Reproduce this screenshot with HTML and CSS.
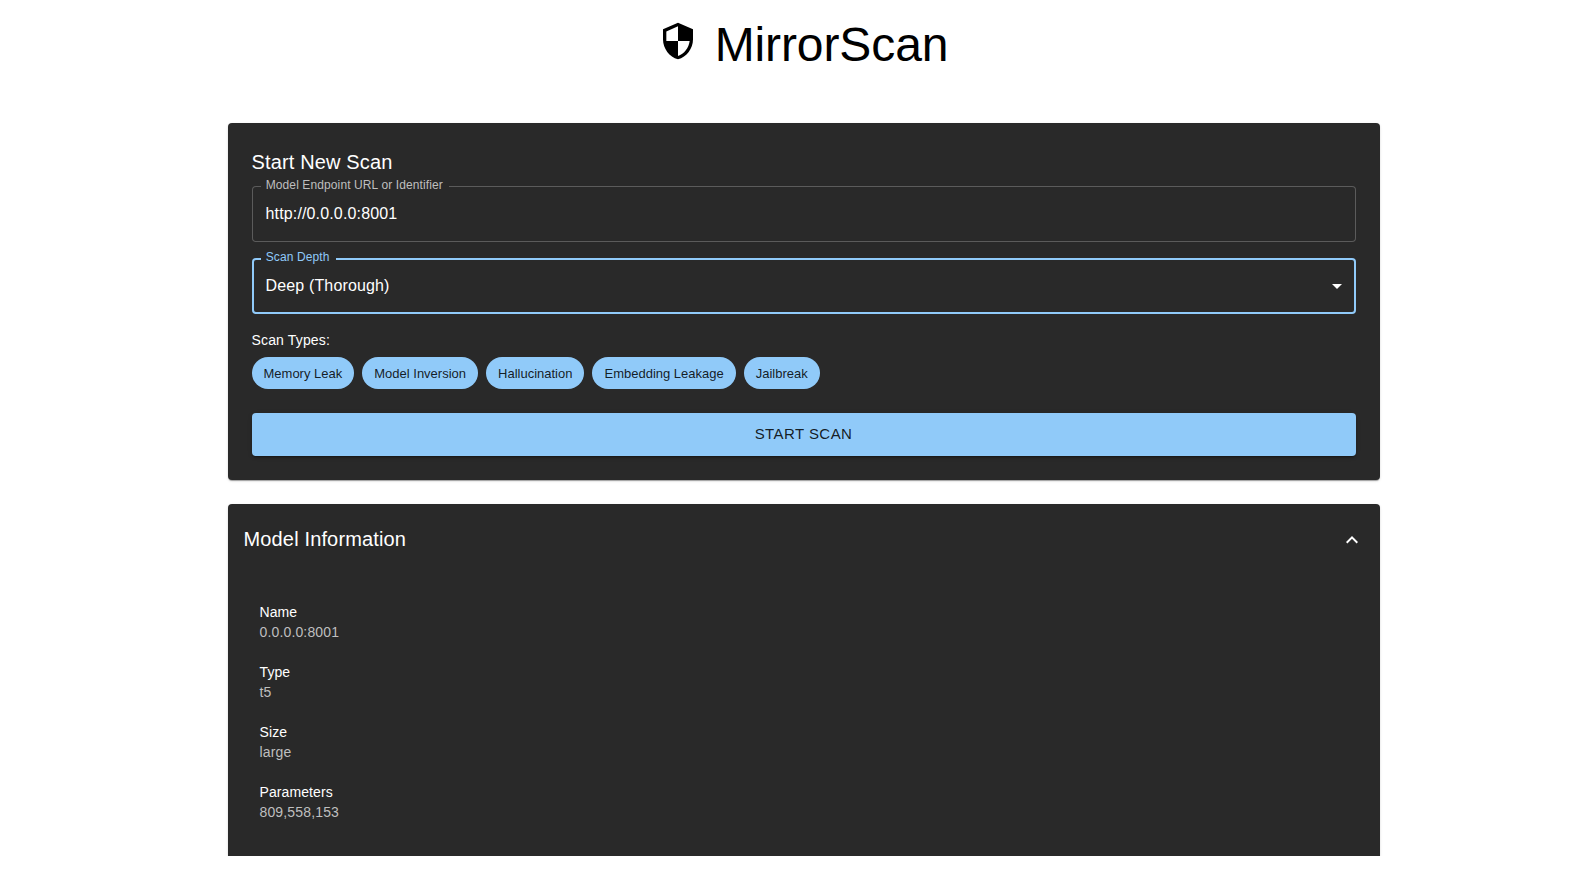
FILE: index.html
```
<!DOCTYPE html>
<html lang="en">
<head>
<meta charset="utf-8">
<title>MirrorScan</title>
<link rel="stylesheet" href="styles.css">
</head>
<body>
<div class="container">
  <header class="header">
    <svg class="logo" viewBox="0 0 24 24"><path d="M12 1 3 5v6c0 5.55 3.84 10.74 9 12 5.16-1.26 9-6.45 9-12V5l-9-4zm0 10.99h7c-.53 4.12-3.28 7.79-7 8.94V12H5V6.3l7-3.11v8.8z"/></svg>
    <h1 class="brand">MirrorScan</h1>
  </header>

  <section class="paper form">
    <h2 class="title">Start New Scan</h2>
    <div class="field">
      <span class="field-label">Model Endpoint URL or Identifier</span>
      <span class="field-value">http://0.0.0.0:8001</span>
    </div>
    <div class="field field-focused">
      <span class="field-label">Scan Depth</span>
      <span class="field-value">Deep (Thorough)</span>
      <svg class="icon" viewBox="0 0 24 24"><path d="m7 10 5 5 5-5z"/></svg>
    </div>
    <div class="types-label">Scan Types:</div>
    <div class="chips">
      <span class="chip">Memory Leak</span>
      <span class="chip">Model Inversion</span>
      <span class="chip">Hallucination</span>
      <span class="chip">Embedding Leakage</span>
      <span class="chip">Jailbreak</span>
    </div>
    <button class="submit" type="button">START SCAN</button>
  </section>

  <section class="paper accordion">
    <div class="summary">
      <h2 class="title">Model Information</h2>
      <svg class="icon" viewBox="0 0 24 24"><path d="m12 8-6 6 1.41 1.41L12 10.83l4.59 4.58L18 14z"/></svg>
    </div>
    <dl class="details">
      <div class="item"><dt>Name</dt><dd>0.0.0.0:8001</dd></div>
      <div class="item"><dt>Type</dt><dd>t5</dd></div>
      <div class="item"><dt>Size</dt><dd>large</dd></div>
      <div class="item"><dt>Parameters</dt><dd>809,558,153</dd></div>
    </dl>
  </section>
</div>
</body>
</html>
```
FILE: styles.css
```
* { box-sizing: border-box; }

body {
  margin: 0;
  background: #fff;
  color: #fff;
  font-family: "Liberation Sans", Arial, sans-serif;
}

h1, h2, dl, dt, dd { margin: 0; font-weight: 400; }

.container { width: 1152px; margin-left: 227.5px; }

.header {
  display: flex;
  justify-content: center;
  height: 123px;
  padding-top: 17px;
  color: #000;
}
.logo { width: 40px; height: 40px; margin: 4px 17px 0 -1px; fill: currentColor; }
.brand { font-size: 48px; line-height: 56px; letter-spacing: -.1px; }

.paper {
  background: #292929;
  box-shadow: 0 2px 1px -1px rgba(0,0,0,.2), 0 1px 1px 0 rgba(0,0,0,.14), 0 1px 3px 0 rgba(0,0,0,.12);
}

.form {
  height: 357px;
  margin-bottom: 24px;
  padding: 23px 24px 24px;
  border-radius: 4px;
}

.title { font-size: 20px; line-height: 32px; letter-spacing: .15px; }

.field {
  position: relative;
  display: flex;
  align-items: center;
  justify-content: space-between;
  height: 56px;
  margin: 8px 0 16px;
  padding: 0 7px 0 14px;
  border-radius: 4px;
  box-shadow: inset 0 0 0 1px #5b5b5b;
}
.field-label {
  position: absolute;
  top: -9px;
  left: 9.5px;
  padding: 0 6px 0 4.7px;
  background: #292929;
  color: #bfbfbf;
  font-size: 12px;
  line-height: 17px;
  letter-spacing: .11px;
}
.field-value { font-size: 16px; line-height: 24px; letter-spacing: .15px; }
.field-focused { margin-bottom: 16px; box-shadow: inset 0 0 0 2px #90caf9; }
.field-focused .field-label { color: #90caf9; }

.icon { width: 24px; height: 24px; fill: #fff; }

.types-label { font-size: 14px; line-height: 20px; letter-spacing: .15px; }

.chips { display: flex; gap: 8px; margin: 7px 0 24px; }
.chip {
  height: 32px;
  padding: 0 12px;
  border-radius: 16px;
  background: #90caf9;
  color: rgba(0,0,0,.87);
  font-size: 13px;
  line-height: 33px;
}

.submit {
  display: block;
  width: 100%;
  height: 43px;
  padding: 0 0 2px;
  border: 0;
  border-radius: 4px;
  background: #90caf9;
  box-shadow: 0 3px 1px -2px rgba(0,0,0,.2), 0 2px 2px 0 rgba(0,0,0,.14), 0 1px 5px 0 rgba(0,0,0,.12);
  color: rgba(0,0,0,.87);
  font: 15px/26px "Liberation Sans", Arial, sans-serif;
  letter-spacing: .43px;
}

.accordion { height: 352px; border-radius: 4px 4px 0 0; }
.summary {
  display: flex;
  align-items: center;
  justify-content: space-between;
  height: 72px;
  padding: 0 16px;
}
.summary .title { padding-bottom: 2px; }

.details { padding: 26px 32px 0; font-size: 14px; line-height: 20px; }
.item { height: 60px; }
.item dt { letter-spacing: .1px; }
.item dd { color: #bfbfbf; letter-spacing: .15px; }
```
